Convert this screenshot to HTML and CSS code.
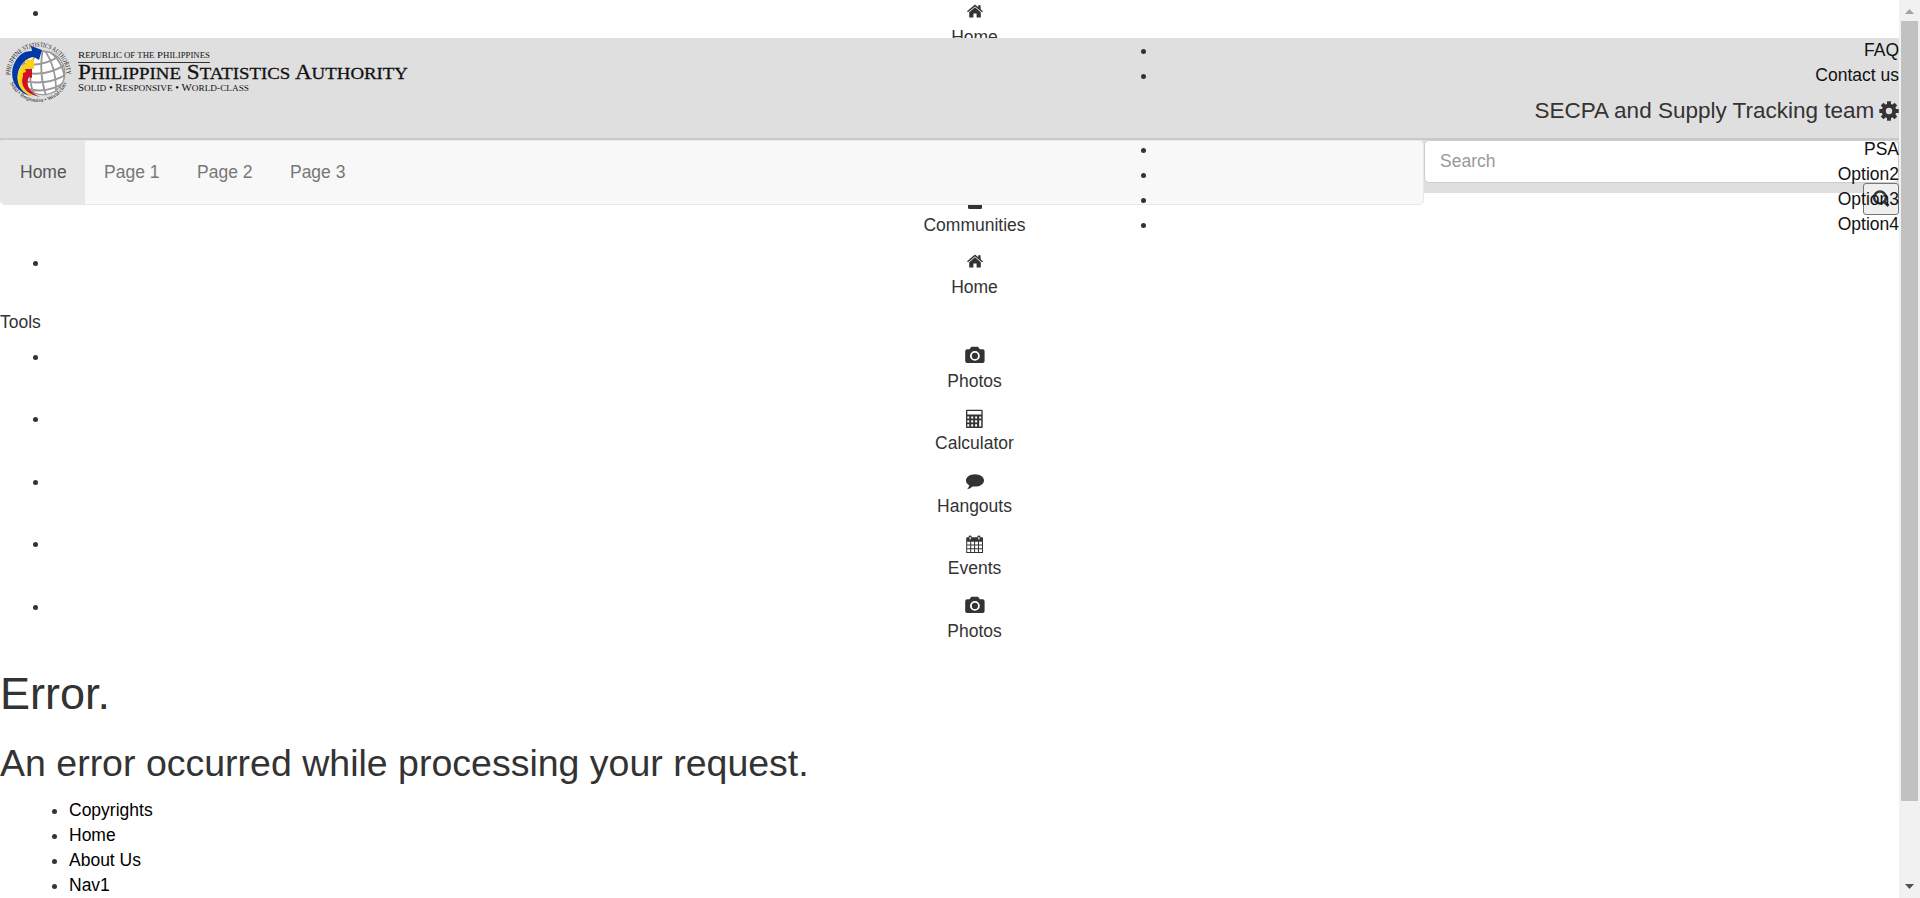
FILE: index.html
```html
<!DOCTYPE html>
<html lang="en">
<head>
<meta charset="utf-8">
<title>Error</title>
<link rel="stylesheet" href="styles.css">
</head>
<body>
<svg width="0" height="0" class="defs">
  <symbol id="home" viewBox="0 0 21 25">
    <path d="M11 7.2L5.2 12.2V17.6H9.4V13.4H12.6V17.6H16.8V12.2Z"/>
    <path d="M3.5 11.8L11 5.5L18.5 11.8" fill="none" stroke="currentColor" stroke-width="1.5"/>
    <path d="M14.2 5.2H16.6V10L14.2 8Z"/>
  </symbol>
  <symbol id="camera" viewBox="0 0 21 25">
    <path fill-rule="evenodd" d="M3.2 6.2H5.5L7.3 3.7H14L15.8 6.2H18.6Q20.6 6.2 20.6 8.2V18Q20.6 20 18.6 20H3.2Q1.2 20 1.2 18V8.2Q1.2 6.2 3.2 6.2ZM10.9 8A4.9 4.9 0 1 0 10.9 17.8A4.9 4.9 0 1 0 10.9 8ZM10.9 9.8A3.1 3.1 0 1 1 10.9 16A3.1 3.1 0 1 1 10.9 9.8Z"/>
  </symbol>
  <symbol id="calculator" viewBox="0 0 21 25">
    <path fill-rule="evenodd" d="M2 4.5Q2 3.7 2.8 3.7H17.8Q18.7 3.7 18.7 4.5V21Q18.7 22 17.8 22H2.8Q2 22 2 21ZM3.3 5V8.6H17.4V5ZM3.3 10.4V12.4H5.3V10.4ZM7.2 10.4V12.4H9.2V10.4ZM11.1 10.4V12.4H13.1V10.4ZM15.2 10.4V12.4H17.2V10.4ZM3.3 14.3V16.4H5.3V14.3ZM7.2 14.3V16.4H9.2V14.3ZM11.1 14.3V16.4H13.1V14.3ZM15.2 14.3V20.5H17.2V14.3ZM3.3 18.3V20.5H5.3V18.3ZM7.2 18.3V20.5H9.2V18.3ZM11.1 18.3V20.5H13.1V18.3Z"/>
  </symbol>
  <symbol id="comment" viewBox="0 0 21 25">
    <path d="M11 6.2C16 6.2 20 9 20 12.4S16 18.6 11 18.6Q9.7 18.6 8.6 18.4Q6.6 20.7 3.2 21.2Q5 19.4 5.2 17.2Q2 15.4 2 12.4C2 9 6 6.2 11 6.2Z"/>
  </symbol>
  <symbol id="calendar" viewBox="0 0 21 25">
    <path fill-rule="evenodd" d="M2.2 7.2Q2.2 6.2 3.2 6.2H4.6V5.8Q4.6 4.5 6.1 4.5T7.7 5.8V6.2H13.3V5.8Q13.3 4.5 14.9 4.5T16.5 5.8V6.2H18Q19 6.2 19 7.2V22H2.2ZM5.6 6V8.6H6.8V6ZM14.3 6V8.6H15.5V6ZM3.2 10.8V13.6H6.2V10.8ZM7.2 10.8V13.6H10.1V10.8ZM11.1 10.8V13.6H14V10.8ZM15 10.8V13.6H18V10.8ZM3.2 14.6V17.3H6.2V14.6ZM7.2 14.6V17.3H10.1V14.6ZM11.1 14.6V17.3H14V14.6ZM15 14.6V17.3H18V14.6ZM3.2 18.3V21H6.2V18.3ZM7.2 18.3V21H10.1V18.3ZM11.1 18.3V21H14V18.3ZM15 18.3V21H18V18.3Z"/>
  </symbol>
  <symbol id="community" viewBox="0 0 21 25">
    <path d="M10.5 4a4.5 4.5 0 0 1 3 8Q18 14 18 17V19.500Q18 21 16.500 21H5.500Q4 21 4 19.500V17Q4 14 8 12A4.500 4.500 0 0 1 10.500 4Z"/>
  </symbol>
</svg>
<main class="page">
  <ul class="side-list">
    <li><svg class="icon"><use href="#home"/></svg><p>Home</p></li>
    <li class="spacer"></li>
    <li class="spacer"></li>
    <li class="unmarked"><svg class="icon"><use href="#community"/></svg><p>Communities</p></li>
    <li><svg class="icon"><use href="#home"/></svg><p>Home</p></li>
  </ul>
  <div class="tools-title">Tools</div>
  <ul class="side-list tools">
    <li><svg class="icon"><use href="#camera"/></svg><p>Photos</p></li>
    <li><svg class="icon"><use href="#calculator"/></svg><p>Calculator</p></li>
    <li><svg class="icon"><use href="#comment"/></svg><p>Hangouts</p></li>
    <li><svg class="icon"><use href="#calendar"/></svg><p>Events</p></li>
    <li><svg class="icon"><use href="#camera"/></svg><p>Photos</p></li>
  </ul>
  <h1>Error.</h1>
  <h2>An error occurred while processing your request.</h2>
  <ul class="footer-list">
    <li>Copyrights</li>
    <li>Home</li>
    <li>About Us</li>
    <li>Nav1</li>
  </ul>

  <header class="site-header">
    <div class="banner">
      <svg class="logo" width="420" height="72" viewBox="0 0 420 72">
        <defs>
          <path id="arc-top" d="M10.200 37A28.200 28.200 0 0 1 66.600 37"/>
          <path id="arc-bottom" d="M9.500 43A30.500 30.500 0 0 0 67.500 43"/>
          <clipPath id="globe"><circle cx="43" cy="35" r="22.500"/></clipPath>
        </defs>
        <circle cx="43" cy="35" r="22.500" fill="#fff"/>
        <g clip-path="url(#globe)" fill="none" stroke="#999" stroke-width="1.900">
          <circle cx="43" cy="35" r="22"/>
          <path d="M20 25Q42 31 62 16M20 34Q46 40 66 26M22 43Q48 48 67 36M28 51Q48 56 65 44M38 12Q24 34 35 59M43 10Q38 36 47 60M43 10Q57 28 56 56M43 10Q64 20 65 44"/>
        </g>
        <path d="M31 58C14 54 8 37 15 24C19 16 25 13 32 13L31 8L42 12L39 22L34 19C24 20 16 31 18 42C19 50 24 55 31 58Z" fill="#0038a8"/>
        <path d="M34 59C19 54 15 43 19 33Q22 26 26 26L25 22L34 21L34 31L30 30C22 34 21 49 34 59Z" fill="#fcd116"/>
        <path d="M40 59C25 56 20 47 23 38L23 35L26 34L25 31L32 31L32 40L29 39C25 47 30 55 40 59Z" fill="#ce1126"/>
        <g class="logo-text">
          <text font-size="6.600"><textPath href="#arc-top" textLength="88" lengthAdjust="spacingAndGlyphs">PHILIPPINE STATISTICS AUTHORITY</textPath></text>
          <text font-size="5.500"><textPath href="#arc-bottom" startOffset="2" textLength="72">Solid • Responsive • World-class</textPath></text>
          <text x="78" y="20" font-size="9.200" textLength="132" lengthAdjust="spacingAndGlyphs">R<tspan font-size="7.500">EPUBLIC OF THE</tspan> P<tspan font-size="7.500">HILIPPINES</tspan></text>
          <text class="logo-name" x="78" y="41" font-size="21.500" textLength="330" lengthAdjust="spacingAndGlyphs">P<tspan font-size="17.500">HILIPPINE</tspan> S<tspan font-size="17.500">TATISTICS</tspan> A<tspan font-size="17.500">UTHORITY</tspan></text>
          <text x="78" y="53.300" font-size="10.500" textLength="171" lengthAdjust="spacingAndGlyphs">S<tspan font-size="9">OLID</tspan> • R<tspan font-size="9">ESPONSIVE</tspan> • W<tspan font-size="9">ORLD-CLASS</tspan></text>
        </g>
        <path d="M78 24.500H210" stroke="#333" stroke-width="1"/>
      </svg>
    </div>
    <div class="toolbar">
      <nav class="navbar"><a class="active">Home</a><a>Page 1</a><a>Page 2</a><a>Page 3</a></nav>
      <form class="search">
        <input type="text" placeholder="Search">
        <button type="button" aria-label="Search"><svg width="18" height="18" viewBox="0 0 18 18" fill="none" stroke="#333"><circle cx="8" cy="7.500" r="5.900" stroke-width="2.500"/><path d="M12 11.500L16.500 16" stroke-width="3"/></svg></button>
      </form>
    </div>
    <div class="account">
      <ul><li>FAQ</li><li>Contact us</li></ul>
      <div class="team">SECPA and Supply Tracking team <svg width="20" height="20" viewBox="-10 -10 20 20"><g fill="#333"><path d="M-2-9.700H2V9.700H-2Z"/><path d="M-2-9.700H2V9.700H-2Z" transform="rotate(45)"/><path d="M-2-9.700H2V9.700H-2Z" transform="rotate(90)"/><path d="M-2-9.700H2V9.700H-2Z" transform="rotate(135)"/><circle r="7.300"/></g><circle r="3.200" fill="#dfdfdf"/></svg></div>
      <ul><li>PSA</li><li>Option2</li><li>Option3</li><li>Option4</li></ul>
    </div>
  </header>
</main>
<aside class="scrollbar">
  <svg width="21" height="21" viewBox="0 0 21 21"><path d="M6 14L10.500 9L15 14Z" fill="#a3a3a3"/></svg>
  <div class="thumb"></div>
  <svg width="21" height="21" viewBox="0 0 21 21"><path d="M6 7L10.500 12L15 7Z" fill="#505050"/></svg>
</aside>
</body>
</html>
```
FILE: styles.css
```css
* { box-sizing: border-box; }
body {
  display: flex;
  height: 898px;
  margin: 0;
  overflow: hidden;
  background: #fff;
  color: #333;
  font: 17.5px/25px "Liberation Sans", Arial, sans-serif;
}
.defs { position: absolute; }
.page { position: relative; flex: 1; overflow: hidden; }

.side-list { margin: 0; padding: 0 0 0 50px; }
.side-list li { height: 62.5px; text-align: center; }
.side-list p { margin: 0; }
.side-list .spacer, .side-list .unmarked { list-style: none; }
.icon { display: inline-block; width: 21px; height: 25px; vertical-align: top; fill: currentColor; }
.tools .icon { margin: -0.7px 0 0.7px; }
.tools-title { height: 31.2px; line-height: 18px; }

h1, h2 { margin: 0; font-weight: 400; line-height: 1.1; }
h1 { margin-top: 12.8px; font-size: 45px; }
h2 { margin-top: 25px; font-size: 37.5px; }
.footer-list { margin: 13px 0 0; padding-left: 69px; color: #000; }
.footer-list li::marker { color: #333; }

.site-header { position: absolute; top: 38px; left: 0; right: 0; height: 155px; background: #dfdfdf; }
.banner { height: 102px; border-bottom: 2px solid #c9c9c9; }
.logo { display: block; }
.logo-text { fill: #111; font-family: "Liberation Serif", serif; }
.logo-name { stroke: #111; stroke-width: 0.3px; }

.toolbar { display: flex; align-items: flex-start; }
.navbar {
  display: flex;
  width: 1424px;
  height: 65px;
  overflow: hidden;
  border: 1px solid #e7e7e7;
  border-left-width: 0;
  border-radius: 5px;
  background: #f8f8f8;
  color: #777;
}
.navbar a { padding: 19px 18.75px; }
.navbar .active { padding-left: 20px; padding-right: 18.6px; background: #e7e7e7; color: #555; }
.search { display: flex; flex: 1; flex-direction: column; align-items: flex-end; }
.search input {
  width: 100%;
  height: 43px;
  padding: 0 15px;
  border: 1px solid #ccc;
  border-radius: 5px;
  background: #fff;
  font: inherit;
}
.search input::placeholder { color: #999; opacity: 1; }
.search button {
  display: flex;
  width: 36px;
  height: 32px;
  padding: 6px 8px;
  border: 1px solid #767676;
  border-radius: 3px;
  background: #efefef;
}
.search svg { flex: none; }

.account { position: absolute; top: 0; right: 0; width: 741px; text-align: right; }
.account ul { margin: 0; padding: 0; color: #111; }
.account li::marker { color: #333; }
.team { height: 49px; font-size: 22.5px; line-height: 46px; }
.team svg { margin-left: -1.5px; vertical-align: -3px; }

.scrollbar { display: flex; flex-direction: column; width: 21px; background: #f1f1f1; }
.thumb { width: 17px; height: 780px; margin: 0 2px auto; background: #c1c1c1; }
```
